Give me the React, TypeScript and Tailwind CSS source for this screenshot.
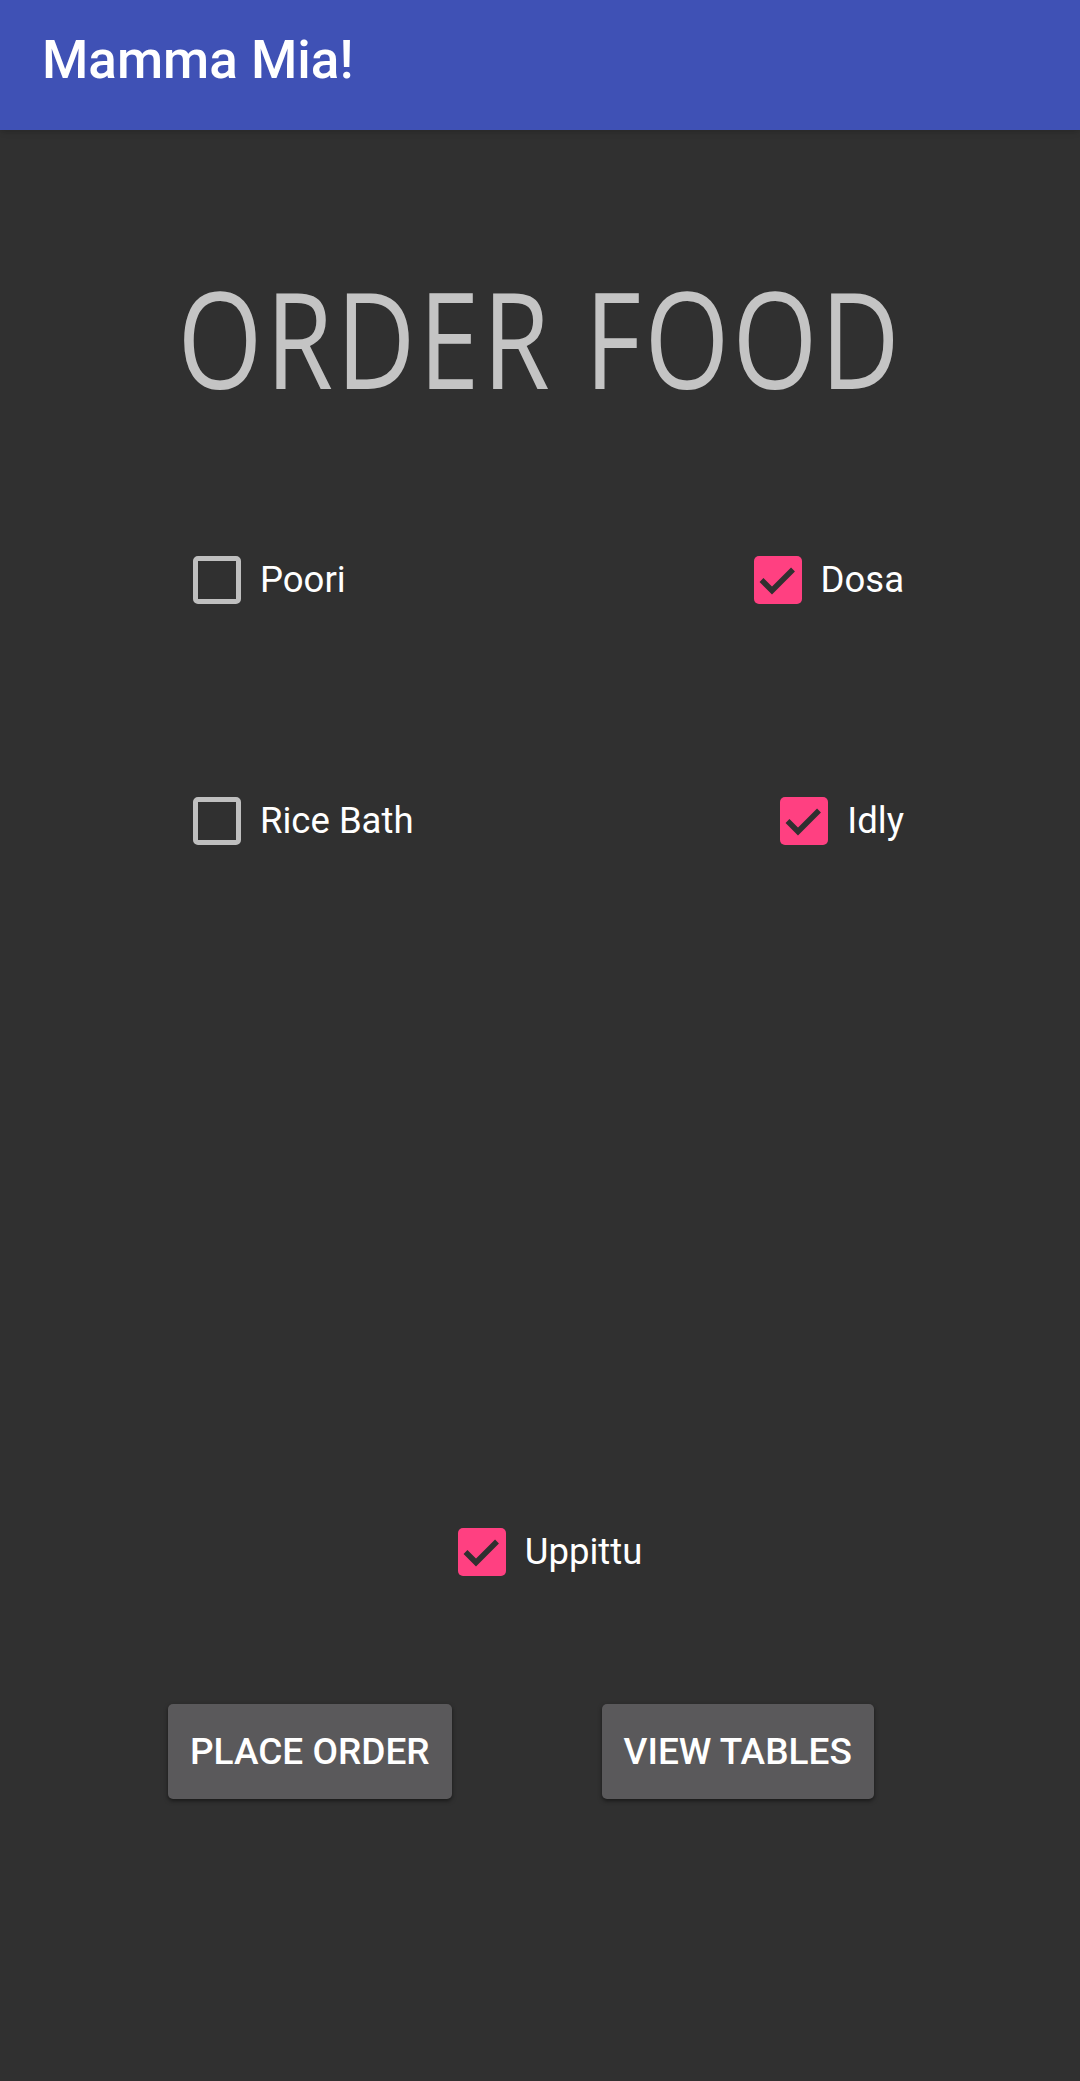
import React, { useState } from 'react'

interface FoodItem {
  id: string
  label: string
  checked: boolean
}

const CheckBox: React.FC<{ checked: boolean; label: string; onToggle: () => void }> = ({
  checked,
  label,
  onToggle,
}) => (
  <button onClick={onToggle} className="flex items-center gap-[19px] h-[48px]">
    {checked ? (
      <span className="w-[48px] h-[48px] rounded-[5px] bg-[#FF4081] flex items-center justify-center">
        <svg width="48" height="48" viewBox="0 0 48 48">
          <polyline
            points="7.5,24 18,34.5 39,13.5"
            fill="none"
            stroke="#303030"
            strokeWidth="5.5"
          />
        </svg>
      </span>
    ) : (
      <span className="w-[48px] h-[48px] rounded-[5px] border-[5px] border-[#bfbfbf]" />
    )}
    <span className="text-[36.5px] leading-none text-white font-['Roboto',sans-serif]">
      {label}
    </span>
  </button>
)

export default function App() {
  const [items, setItems] = useState<FoodItem[]>([
    { id: 'poori', label: 'Poori', checked: false },
    { id: 'dosa', label: 'Dosa', checked: true },
    { id: 'rice', label: 'Rice Bath', checked: false },
    { id: 'idly', label: 'Idly', checked: true },
    { id: 'uppittu', label: 'Uppittu', checked: true },
  ])

  const toggle = (id: string) =>
    setItems((prev) => prev.map((it) => (it.id === id ? { ...it, checked: !it.checked } : it)))

  const box = (id: string) => {
    const it = items.find((i) => i.id === id)!
    return <CheckBox checked={it.checked} label={it.label} onToggle={() => toggle(id)} />
  }

  return (
    <div className="w-[1080px] min-h-[2081px] bg-[#303030] flex flex-col font-['Roboto',sans-serif]">
      {/* App bar */}
      <header className="h-[130px] bg-[#3F51B5] px-[42px] pt-[34px] shadow-md">
        <h1 className="text-[53px] leading-none font-medium text-white">Mamma Mia!</h1>
      </header>

      {/* Title */}
      <div className="mt-[141px] text-center">
        <h2 className="inline-block text-[133px] leading-none text-[#c4c4c4] font-['Open_Sans',sans-serif] font-normal scale-x-[0.82] tracking-[4px]">
          ORDER FOOD
        </h2>
      </div>

      {/* Checkbox rows */}
      <div className="mt-[152px] flex justify-between pl-[193px] pr-[176px]">
        {box('poori')}
        {box('dosa')}
      </div>
      <div className="mt-[193px] flex justify-between pl-[193px] pr-[176px]">
        {box('rice')}
        {box('idly')}
      </div>
      <div className="mt-[683px] flex justify-center pl-[20px]">{box('uppittu')}</div>

      {/* Buttons */}
      <div className="mt-[128px] flex gap-[150px] pl-[168px]">
        <button className="h-[95px] px-[22px] rounded-[5px] bg-[#5a595b] text-white text-[37px] font-medium uppercase shadow-[0_2px_4px_rgba(0,0,0,0.5)]">
          Place Order
        </button>
        <button className="h-[95px] px-[22px] rounded-[5px] bg-[#5a595b] text-white text-[37px] font-medium uppercase shadow-[0_2px_4px_rgba(0,0,0,0.5)]">
          View Tables
        </button>
      </div>
    </div>
  )
}
